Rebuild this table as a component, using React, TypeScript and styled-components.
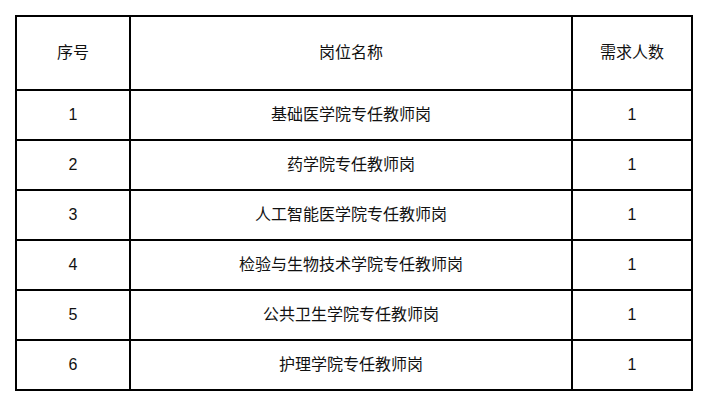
import React from 'react'
import { styled, createGlobalStyle } from 'styled-components'

const GlobalStyle = createGlobalStyle`
  html, body {
    margin: 0;
    padding: 0;
    background: #fff;
  }
  body {
    font-family: "Liberation Sans", "Noto Sans CJK SC", sans-serif;
    color: #111;
  }
`

const Page = styled.div`
  padding: 15px;
`

const Table = styled.div`
  width: 678px;
  display: grid;
  grid-template-columns: 112px 440px 118px;
  grid-template-rows: 72px repeat(6, 48px);
  gap: 2px;
  padding: 2px;
  box-sizing: border-box;
  background: #000;
`

const Cell = styled.div`
  background: #fff;
  display: flex;
  align-items: center;
  justify-content: center;
  font-size: 16px;
  line-height: 1;
`

interface Row {
  readonly no: number;
  readonly name: string;
  readonly count: number;
}

const rows: Row[] = [
  { no: 1, name: '基础医学院专任教师岗', count: 1 },
  { no: 2, name: '药学院专任教师岗', count: 1 },
  { no: 3, name: '人工智能医学院专任教师岗', count: 1 },
  { no: 4, name: '检验与生物技术学院专任教师岗', count: 1 },
  { no: 5, name: '公共卫生学院专任教师岗', count: 1 },
  { no: 6, name: '护理学院专任教师岗', count: 1 },
]

const App = () => {
  return (
    <>
      <GlobalStyle />
      <Page>
        <Table>
          <Cell>序号</Cell>
          <Cell>岗位名称</Cell>
          <Cell>需求人数</Cell>
          {rows.map((r) => (
            <React.Fragment key={r.no}>
              <Cell>{r.no}</Cell>
              <Cell>{r.name}</Cell>
              <Cell>{r.count}</Cell>
            </React.Fragment>
          ))}
        </Table>
      </Page>
    </>
  )
}

export default App
